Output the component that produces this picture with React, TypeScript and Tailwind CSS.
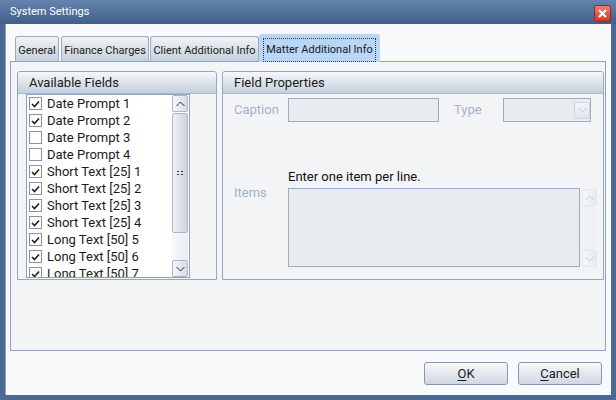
import React from 'react';

type Field = { label: string; checked: boolean };

const fields: Field[] = [
    { label: 'Date Prompt 1', checked: true },
    { label: 'Date Prompt 2', checked: true },
    { label: 'Date Prompt 3', checked: false },
    { label: 'Date Prompt 4', checked: false },
    { label: 'Short Text [25] 1', checked: true },
    { label: 'Short Text [25] 2', checked: true },
    { label: 'Short Text [25] 3', checked: true },
    { label: 'Short Text [25] 4', checked: true },
    { label: 'Long Text [50] 5', checked: true },
    { label: 'Long Text [50] 6', checked: true },
    { label: 'Long Text [50] 7', checked: true },
];

const Chevron = ({ up, faded }: { up?: boolean; faded?: boolean }) => (
    <svg width="9" height="6" viewBox="0 0 9 6" fill="none" stroke={faded ? '#c3cbd6' : '#2b2b2b'} strokeWidth={1}>
        <path d={up ? 'M0.5 5 L4.5 1 L8.5 5' : 'M0.5 1 L4.5 5 L8.5 1'} />
    </svg>
);

const ScrollButton = ({ up, faded }: { up?: boolean; faded?: boolean }) => (
    <div
        className={`h-[17px] flex items-center justify-center rounded-[2px] border ${
            faded
                ? 'border-[#e3e7ed] bg-gradient-to-r from-[#f6f7f9] to-[#e6eaf0]'
                : 'border-[#a9b6c8] bg-gradient-to-r from-[#f5f7fa] to-[#d5dce6]'
        }`}
    >
        <Chevron up={up} faded={faded} />
    </div>
);

const CheckBox = ({ checked }: { checked: boolean }) => (
    <div className="w-[13px] h-[13px] border border-[#8795ab] bg-white flex items-center justify-center shrink-0">
        {checked && (
            <svg width="9" height="8" viewBox="0 0 9 8" fill="none" stroke="#1e1e1e" strokeWidth={1.6}>
                <path d="M1 4 L3.5 6.5 L8 1.5" />
            </svg>
        )}
    </div>
);

const GroupHeader = ({ title }: { title: string }) => (
    <div className="h-[22px] shrink-0 flex items-center pl-[11px] rounded-t-[3px] border-b border-[#aab8cb] bg-gradient-to-b from-[#f7f8fa] to-[#c4cedb] text-[13px] text-[#1b1b1b]">
        {title}
    </div>
);

const Tab = ({ label, width, selected }: { label: string; width: string; selected?: boolean }) =>
    selected ? (
        <div className={`${width} h-[28px] -mb-px relative z-10 flex items-center justify-center pt-[3px] rounded-t-[3px] border border-b-0 border-[#c5d6ea] bg-[#b8d6f7] text-[11px] text-[#1b1b1b]`}>
            <span className="border border-dotted border-[#3a3a3a] px-[2px] leading-[22px]">{label}</span>
        </div>
    ) : (
        <div className={`${width} h-[25px] flex items-center justify-center pt-[5px] rounded-t-[3px] border border-b-0 border-[#9cacc2] bg-gradient-to-b from-[#f2f4f7] to-[#c6d0dc] text-[11px] text-[#1b1b1b]`}>
            {label}
        </div>
    );

const DialogButton = ({ hot, rest }: { hot: string; rest: string }) => (
    <button className="w-[84px] h-[23px] rounded-[3px] border border-[#8797af] bg-gradient-to-b from-[#f7f8fa] to-[#d0d8e3] text-[13px] text-[#1b1b1b] flex items-center justify-center">
        <span className="underline underline-offset-2">{hot}</span>
        {rest}
    </button>
);

export default function App() {
    return (
        <div className="w-[616px] h-[400px] flex flex-col bg-[#4a6993] font-['Roboto',sans-serif] overflow-hidden">
            <div className="h-[24px] shrink-0 flex items-center justify-between pl-[10px] pr-[5px] bg-gradient-to-b from-[#6584ad] to-[#3f5e8a] text-white text-[11px]">
                <span className="pt-[1px]">System Settings</span>
                <div className="w-[17px] h-[17px] mt-[2px] rounded-[2px] border border-[#8c2b25] bg-gradient-to-b from-[#ee7d72] to-[#cf382d] flex items-center justify-center">
                    <svg width="9" height="9" viewBox="0 0 9 9" stroke="white" strokeWidth={2.2}>
                        <path d="M1 1 L8 8 M8 1 L1 8" />
                    </svg>
                </div>
            </div>

            <div className="flex-1 mx-[5px] mb-[5px] border-l border-[#8aa0bf] bg-[#f8fafc] flex flex-col pt-[10px]">
                <div className="h-[27px] flex items-end pl-[9px] shrink-0">
                    <Tab label="General" width="w-[44px]" />
                    <div className="ml-[2px]">
                        <Tab label="Finance Charges" width="w-[88px]" />
                    </div>
                    <div className="ml-[1px]">
                        <Tab label="Client Additional Info" width="w-[109px]" />
                    </div>
                    <Tab label="Matter Additional Info" width="w-[121px]" selected />
                </div>

                <div className="ml-[4px] w-[596px] h-[290px] border border-[#8fa3c0] bg-[#f3f4f6] flex gap-[5px] pl-[6px] pt-[9px] shrink-0">
                    <div className="w-[200px] h-[209px] rounded-t-[3px] border border-[#94a7c3] flex flex-col">
                        <GroupHeader title="Available Fields" />
                        <div className="ml-[8px] w-[164px] h-[184px] border border-[#8fa3c0] bg-white flex overflow-hidden">
                            <div className="flex-1 flex flex-col overflow-hidden">
                                {fields.map((f) => (
                                    <div key={f.label} className="h-[17px] shrink-0 flex items-center pl-[2px] gap-[5px] text-[13px] text-[#1b1b1b]">
                                        <CheckBox checked={f.checked} />
                                        <span className="leading-[17px] whitespace-nowrap">{f.label}</span>
                                    </div>
                                ))}
                            </div>
                            <div className="w-[16px] mr-[1px] flex flex-col">
                                <ScrollButton up />
                                <div className="flex-1 flex flex-col pt-[1px]">
                                    <div className="h-[120px] rounded-[2px] border border-[#a9b6c8] bg-gradient-to-r from-[#eef1f5] to-[#c9d2de] flex items-center justify-center">
                                        <svg width="6" height="4" viewBox="0 0 6 4" fill="#3a3a3a">
                                            <rect x="0" y="0" width="2" height="1" />
                                            <rect x="4" y="0" width="2" height="1" />
                                            <rect x="0" y="3" width="2" height="1" />
                                            <rect x="4" y="3" width="2" height="1" />
                                        </svg>
                                    </div>
                                    <div className="flex-1 bg-gradient-to-r from-[#f7f8fa] to-[#e9edf2]" />
                                </div>
                                <ScrollButton />
                            </div>
                        </div>
                    </div>

                    <div className="w-[382px] h-[209px] rounded-t-[3px] border border-[#94a7c3] flex flex-col">
                        <GroupHeader title="Field Properties" />
                        <div className="mt-[4px] pl-[11px] flex items-center text-[13px] text-[#a5b3c7]">
                            <div className="w-[54px]">Caption</div>
                            <div className="w-[151px] h-[24px] border border-[#9badc4] bg-[#e8ebf0]" />
                            <div className="ml-[15px] w-[49px]">Type</div>
                            <div className="w-[88px] h-[24px] border border-[#9badc4] bg-[#e8ebf0] flex items-center justify-end">
                                <div className="w-[16px] h-[17px] rounded-[2px] border border-[#cdd5e0] bg-gradient-to-b from-[#f4f6f8] to-[#dfe4eb] flex items-center justify-center">
                                    <Chevron faded />
                                </div>
                            </div>
                        </div>
                        <div className="mt-[46px] pl-[11px] flex text-[13px]">
                            <div className="w-[54px] pt-[15px] text-[#a5b3c7]">Items</div>
                            <div className="flex flex-col">
                                <div className="h-[17px] leading-[17px] text-[#111]">Enter one item per line.</div>
                                <div className="mt-[3px] flex">
                                    <div className="w-[292px] h-[79px] border border-[#9badc4] bg-[#e8ebf0]" />
                                    <div className="ml-[2px] mt-[1px] w-[15px] h-[78px] flex flex-col bg-[#f0f2f5]">
                                        <ScrollButton up faded />
                                        <div className="flex-1" />
                                        <ScrollButton faded />
                                    </div>
                                </div>
                            </div>
                        </div>
                    </div>
                </div>

                <div className="mt-[11px] flex justify-end gap-[10px] pr-[9px]">
                    <DialogButton hot="O" rest="K" />
                    <DialogButton hot="C" rest="ancel" />
                </div>
            </div>
        </div>
    );
}
